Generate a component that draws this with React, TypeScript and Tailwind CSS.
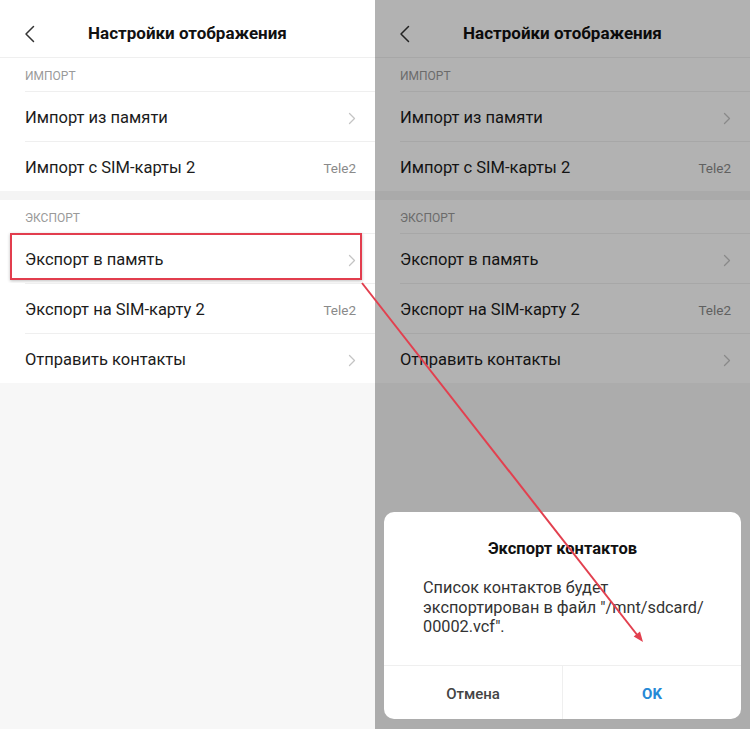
import type { ReactNode } from 'react';

const font = { fontFamily: 'Roboto, "Noto Sans", "Liberation Sans", sans-serif' };

function Chevron() {
  return (
    <svg width="8" height="13" viewBox="0 0 8 13" fill="none" className="shrink-0">
      <path d="M1.5 1.5 L6.5 6.5 L1.5 11.5" stroke="#c4c4c4" strokeWidth="1.3" strokeLinecap="round" strokeLinejoin="round" />
    </svg>
  );
}

function SectionLabel({ children }: { children: ReactNode }) {
  return (
    <div className="flex h-[33px] items-end bg-white pb-[7px] pl-[25px] text-[12px] leading-4 text-[#9a9a9a]">
      {children}
    </div>
  );
}

function Row({ label, tail, boxed }: { label: string; tail?: string; boxed?: boolean }) {
  return (
    <div className="relative bg-white pl-[25px]">
      <div className="flex h-[50px] items-center justify-between border-t border-[#efefef] pr-[19px] pt-[4px]">
        <span className="text-[16.5px] text-[#1c1c1c]">{label}</span>
        {tail ? <span className="text-[13.5px] text-[#8a8a8a]">{tail}</span> : <Chevron />}
      </div>
      {boxed && (
        <div className="absolute left-[10px] top-0 h-[47px] w-[352px] border-[2.5px] border-[#e23d4e] shadow-[0_1px_3px_rgba(0,0,0,0.25)]" />
      )}
    </div>
  );
}

function Screen({ highlight }: { highlight?: boolean }) {
  return (
    <div className="flex h-[729px] w-[375px] flex-col bg-[#f7f7f7]">
      <header className="grid h-[58px] grid-cols-[58px_1fr_58px] items-center border-b border-[#efefef] bg-white pt-[10px]">
        <svg width="12" height="18" viewBox="0 0 12 18" fill="none" className="ml-[24px]">
          <path d="M9.5 1.5 L2 9 L9.5 16.5" stroke="#333" strokeWidth="1.5" strokeLinecap="round" strokeLinejoin="round" />
        </svg>
        <h1 className="text-center text-[17px] font-bold text-[#111]">Настройки отображения</h1>
        <span />
      </header>
      <SectionLabel>ИМПОРТ</SectionLabel>
      <Row label="Импорт из памяти" />
      <Row label="Импорт с SIM-карты 2" tail="Tele2" />
      <div className="h-[9px] bg-[#f4f4f4]" />
      <SectionLabel>ЭКСПОРТ</SectionLabel>
      <Row label="Экспорт в память" boxed={highlight} />
      <Row label="Экспорт на SIM-карту 2" tail="Tele2" />
      <Row label="Отправить контакты" />
    </div>
  );
}

export default function App() {
  return (
    <div className="relative flex h-[729px] w-[750px] overflow-hidden" style={font}>
      <Screen highlight />
      <div className="relative">
        <Screen />
        <div className="absolute inset-0 bg-black/30" />
        <div className="absolute bottom-[10px] left-[9px] flex h-[207px] w-[357px] flex-col rounded-[10px] bg-white">
          <h2 className="pt-[27px] text-center text-[16.5px] font-bold leading-5 text-[#111]">Экспорт контактов</h2>
          <p className="mt-[19px] flex-1 pl-[39px] text-[16.3px] leading-[19.5px] text-[#333]">
            Список контактов будет
            <br />
            экспортирован в файл "/mnt/sdcard/
            <br />
            00002.vcf".
          </p>
          <div className="grid h-[54px] grid-cols-[179px_1fr] border-t border-[#efefef]">
            <button className="border-r border-[#efefef] pt-[3px] text-[15px] font-medium text-[#444]">Отмена</button>
            <button className="pt-[3px] text-[15px] font-bold text-[#2589d6]">OK</button>
          </div>
        </div>
      </div>
      <svg className="pointer-events-none absolute inset-0" width="750" height="729" viewBox="0 0 750 729">
        <line x1="362" y1="283" x2="638" y2="636" stroke="#e2404f" strokeWidth="2" />
        <polygon points="643,642 633.7,636.6 640,631.6" fill="#e2404f" />
      </svg>
    </div>
  );
}
